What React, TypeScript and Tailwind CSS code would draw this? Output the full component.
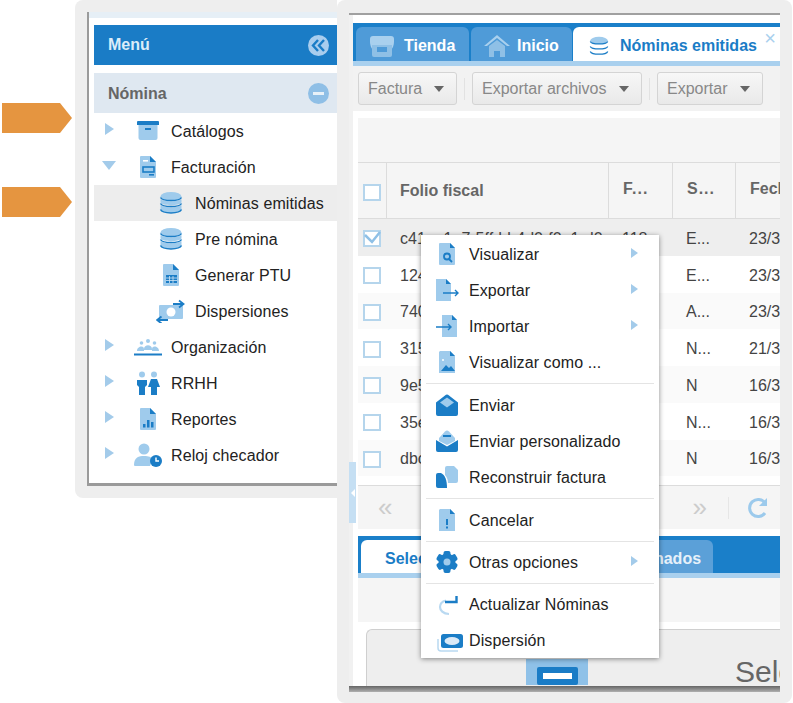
import type { ReactNode } from "react";

const L = "#9fcbec";
const D = "#1b7dc6";

function Ico({ w = 24, h = 24, vb = "0 0 24 24", children }: { w?: number; h?: number; vb?: string; children: ReactNode }) {
  return (
    <svg width={w} height={h} viewBox={vb} className="shrink-0">
      {children}
    </svg>
  );
}

const docPath = "M5 1h9l6 6v15a1 1 0 0 1-1 1H5a1 1 0 0 1-1-1V2a1 1 0 0 1 1-1z";
const docFold = "M14 1l6 6h-6z";

const ArchiveIcon = () => (
  <Ico>
    <path d="M2.500 6h19v13a2 2 0 0 1-2 2h-15a2 2 0 0 1-2-2z" fill={L} />
    <path d="M1 3a1 1 0 0 1 1-1h20a1 1 0 0 1 1 1v3H1z" fill={D} />
    <rect x="9" y="9" width="6" height="2" fill={D} />
  </Ico>
);
const InvoiceIcon = () => (
  <Ico>
    <path d={docPath} fill={L} />
    <path d={docFold} fill={D} />
    <rect x="7" y="5" width="5" height="1.600" fill="#fff" />
    <rect x="7" y="12" width="11" height="5" fill="none" stroke={D} strokeWidth="1.600" />
    <rect x="13" y="19" width="5" height="1.600" fill={D} />
  </Ico>
);
const DbIcon = ({ size = 24, flat = false }: { size?: number; flat?: boolean }) => (
  <Ico w={size} h={size}>
    <ellipse cx="12" cy="5.500" rx="10.500" ry="4.500" fill={L} />
    <path d="M1.500 8c2 3 19 3 21 0v3.500c-2 3.500-19 3.500-21 0z" fill={flat ? "#fff" : L} />
    <path d="M1.500 14c2 3 19 3 21 0v4.500c-2 4.500-19 4.500-21 0z" fill={flat ? "#fff" : L} />
    <path d="M1.500 6.500c2 4 19 4 21 0M1.500 12.500c2 4 19 4 21 0" fill="none" stroke={D} strokeWidth="1.500" />
    <path d="M1.500 18.500c2 4.500 19 4.500 21 0" fill="none" stroke={D} strokeWidth="1.500" />
  </Ico>
);
const CalcIcon = () => (
  <Ico>
    <path d={docPath} fill={L} />
    <path d={docFold} fill={D} />
    <rect x="7" y="12" width="11" height="8" fill={D} />
    <path d="M7 15h11M7 17.500h11M10.500 13v7M14 13v7" stroke="#cfe4f5" strokeWidth=".8" />
  </Ico>
);
const MoneyIcon = () => (
  <Ico w={30} h={24} vb="0 0 30 24">
    <rect x="3" y="6" width="24" height="14" rx="1" fill={L} />
    <circle cx="15" cy="13" r="4.500" fill="#fff" />
    <path d="M17 5h9M23 1.500L27.500 5 23 8.500" fill="none" stroke={D} strokeWidth="1.800" />
    <path d="M12 21H2M5.500 17.500L1 21l4.500 3.500" fill="none" stroke={D} strokeWidth="1.800" />
  </Ico>
);
const OrgIcon = () => (
  <Ico w={28} h={20} vb="0 0 28 20">
    <circle cx="14" cy="4" r="2" fill={L} />
    <circle cx="7.500" cy="6" r="1.800" fill={L} />
    <circle cx="20.500" cy="6" r="1.800" fill={L} />
    <path d="M10 12c0-5 8-5 8 0v1h-8zM3 14c0-5 7-6 7-2v2zM25 14c0-5-7-6-7-2v2z" fill={L} />
    <rect y="16.500" width="28" height="2" fill={D} />
  </Ico>
);
const PeopleIcon = () => (
  <Ico>
    <circle cx="6" cy="3.500" r="3" fill={L} />
    <circle cx="18" cy="3.500" r="3" fill={L} />
    <path d="M1 9h10v5l-2 2v8H3v-8l-2-2z" fill={D} />
    <path d="M15 8h6l3 8h-3v8h-6v-8h-3z" fill={D} />
  </Ico>
);
const ReportIcon = () => (
  <Ico>
    <path d={docPath} fill={L} />
    <path d={docFold} fill={D} />
    <rect x="7" y="17" width="2.500" height="3.500" fill={D} />
    <rect x="11" y="13" width="2.500" height="7.500" fill={D} />
    <rect x="15" y="15" width="2.500" height="5.500" fill={D} />
  </Ico>
);
const ClockUserIcon = () => (
  <Ico w={28} h={24} vb="0 0 28 24">
    <circle cx="10" cy="6" r="5.500" fill={L} />
    <path d="M0 22c0-8 5-9 10-9s7 1 9 3l-3 7H1a1 1 0 0 1-1-1z" fill={L} />
    <circle cx="22" cy="18" r="6" fill={D} />
    <path d="M22 14.500V18h3" fill="none" stroke="#fff" strokeWidth="1.400" />
  </Ico>
);
const StoreIcon = () => (
  <Ico w={24} h={22} vb="0 0 24 22">
    <path d="M3 1h18a3 3 0 0 1 3 3v3a2.500 2.500 0 0 1-24 0V4a3 3 0 0 1 3-3z" fill="#a9d0ee" />
    <path d="M2 10h20v10a2 2 0 0 1-2 2H4a2 2 0 0 1-2-2z" fill="#8fc0e6" />
    <rect x="7" y="12" width="10" height="5" fill="#4f9bd8" />
  </Ico>
);
const HomeIcon = () => (
  <Ico w={26} h={22} vb="0 0 26 22">
    <path d="M0 11L13 0l13 11h-3L13 3 3 11z" fill="#a9d0ee" />
    <path d="M5 11l8-6 8 6v11h-5v-6h-6v6H5z" fill="#8fc0e6" />
  </Ico>
);
const MiniArrow = ({ x1, x2, y }: { x1: number; x2: number; y: number }) => (
  <path d={`M${x1} ${y}H${x2}M${x2 - 3} ${y - 3}l3 3-3 3`} fill="none" stroke={D} strokeWidth="1.400" />
);
const ViewDocIcon = () => (
  <Ico>
    <path d="M5 1h10l5 5v16a1 1 0 0 1-1 1H5a1 1 0 0 1-1-1V2a1 1 0 0 1 1-1z" fill={L} />
    <path d="M15 1l5 5h-5z" fill={D} />
    <circle cx="12" cy="14.500" r="3" fill="none" stroke={D} strokeWidth="1.800" />
    <path d="M14 17l3 3" stroke={D} strokeWidth="1.800" />
  </Ico>
);
const ExportIcon = () => (
  <Ico>
    <path d="M1 1h10l5 5v17H1z" fill={L} />
    <path d="M11 1l5 5h-5z" fill={D} />
    <MiniArrow x1={8} x2={23} y={15} />
  </Ico>
);
const ImportIcon = () => (
  <Ico>
    <path d="M7 1h10l5 5v17H7z" fill={L} />
    <path d="M17 1l5 5h-5z" fill={D} />
    <MiniArrow x1={1} x2={16} y={13} />
  </Ico>
);
const ImageDocIcon = () => (
  <Ico>
    <path d="M5 1h10l5 5v17H4V2z" fill={L} />
    <path d="M15 1l5 5h-5z" fill={D} />
    <path d="M6 21l5-6 3 3 2-2 4 5z" fill={D} />
    <circle cx="8" cy="10" r="1" fill="#fff" />
  </Ico>
);
const MailOpenIcon = () => (
  <Ico>
    <path d="M1 9.500L10 2.500a3 3 0 0 1 4 0l9 7V21a2 2 0 0 1-2 2H3a2 2 0 0 1-2-2z" fill={D} />
    <path d="M5 9.500l7-5 7 5-7 5z" fill={L} />
  </Ico>
);
const MailCustomIcon = () => (
  <Ico>
    <path d="M4 9l6-6.500a3 3 0 0 1 4 0l6 6.500v3l-8 4-8-4z" fill={L} />
    <rect x="8" y="6" width="8" height="2" fill={D} />
    <path d="M1 11l11 6.500L23 11v10a2 2 0 0 1-2 2H3a2 2 0 0 1-2-2z" fill={D} />
  </Ico>
);
const RebuildIcon = () => (
  <Ico>
    <path d="M12 1h7l4 4v11a2 2 0 0 1-2 2h-8c0-3-1-6-3-8V3a2 2 0 0 1 2-2z" fill={L} />
    <path d="M3 8h3c4 2 6 7 6 15H3a2 2 0 0 1-2-2V10a2 2 0 0 1 2-2z" fill={D} />
  </Ico>
);
const AlertDocIcon = () => (
  <Ico>
    <path d="M5 1h10l5 5v17H4V2z" fill={L} />
    <path d="M15 1l5 5h-5z" fill={D} />
    <rect x="11" y="11" width="2" height="6" fill={D} />
    <rect x="11" y="18.500" width="2" height="2" fill={D} />
  </Ico>
);
const GearIcon = () => (
  <Ico>
    <circle cx="12" cy="12" r="8.500" fill={D} />
    <rect x="8.500" y="1" width="7" height="22" rx="2" fill={D} />
    <rect x="8.500" y="1" width="7" height="22" rx="2" fill={D} transform="rotate(60 12 12)" />
    <rect x="8.500" y="1" width="7" height="22" rx="2" fill={D} transform="rotate(120 12 12)" />
    <circle cx="12" cy="12" r="3.500" fill={L} />
  </Ico>
);
const UpdateIcon = () => (
  <Ico>
    <path d="M11 8.500C7 9.500 5 12 5 15s3 7 9 7" fill="none" stroke="#b9d9f1" strokeWidth="2.200" />
    <path d="M10 10h11.500V4" fill="none" stroke={D} strokeWidth="2.400" />
  </Ico>
);
const CashIcon = () => (
  <Ico w={34} h={24} vb="-7 0 34 24">
    <path d="M1 11v9a3 3 0 0 0 3 3h17" fill="none" stroke="#b9d9f1" strokeWidth="1.500" />
    <rect x="4" y="6" width="22" height="14" rx="2.500" fill={D} />
    <ellipse cx="15" cy="13" rx="7.500" ry="4" fill="#dbeaf7" />
  </Ico>
);

const TriRight = ({ small = false }: { small?: boolean }) => (
  <svg width={small ? 7 : 9} height={small ? 10 : 12} viewBox="0 0 10 13" preserveAspectRatio="none" className="shrink-0">
    <path d="M0 0l10 6.500L0 13z" fill="#a3cbea" />
  </svg>
);
const TriDown = () => (
  <svg width="14" height="9" viewBox="0 0 14 9" className="shrink-0">
    <path d="M0 0h14L7 9z" fill="#a3cbea" />
  </svg>
);
const Caret = () => (
  <svg width="10" height="6" viewBox="0 0 10 6" className="shrink-0">
    <path d="M0 0h10L5 6z" fill="#666" />
  </svg>
);
const Arrow = () => (
  <svg width="70" height="30" viewBox="0 0 70 30" className="ml-[2px]">
    <path d="M0 0h58l12 15-12 15H0z" fill="#e59540" />
  </svg>
);

const tree = [
  { label: "Catálogos", icon: <ArchiveIcon />, open: false },
  { label: "Facturación", icon: <InvoiceIcon />, open: true },
  { label: "Nóminas emitidas", icon: <DbIcon />, child: true, active: true },
  { label: "Pre nómina", icon: <DbIcon />, child: true },
  { label: "Generar PTU", icon: <CalcIcon />, child: true },
  { label: "Dispersiones", icon: <MoneyIcon />, child: true },
  { label: "Organización", icon: <OrgIcon />, open: false },
  { label: "RRHH", icon: <PeopleIcon />, open: false },
  { label: "Reportes", icon: <ReportIcon />, open: false },
  { label: "Reloj checador", icon: <ClockUserIcon />, open: false },
];

const rows = [
  { id: "c41ea1e7-5ffd-b4d0-f0e1-d0a9", f: "118", s: "E...", d: "23/3", on: true },
  { id: "124", f: "", s: "E...", d: "23/3" },
  { id: "740", f: "", s: "A...", d: "23/3" },
  { id: "315", f: "", s: "N...", d: "21/3" },
  { id: "9e5", f: "", s: "N", d: "16/3" },
  { id: "35e", f: "", s: "N...", d: "16/3" },
  { id: "dbc", f: "", s: "N", d: "16/3" },
];

type MenuItem = { label: string; icon: ReactNode; sub?: boolean };

const menu: (MenuItem | "sep" | "sep-sm")[] = [
  { label: "Visualizar", icon: <ViewDocIcon />, sub: true },
  { label: "Exportar", icon: <ExportIcon />, sub: true },
  { label: "Importar", icon: <ImportIcon />, sub: true },
  { label: "Visualizar como ...", icon: <ImageDocIcon /> },
  "sep",
  { label: "Enviar", icon: <MailOpenIcon /> },
  { label: "Enviar personalizado", icon: <MailCustomIcon /> },
  { label: "Reconstruir factura", icon: <RebuildIcon /> },
  "sep",
  { label: "Cancelar", icon: <AlertDocIcon /> },
  "sep-sm",
  { label: "Otras opciones", icon: <GearIcon />, sub: true },
  "sep-sm",
  { label: "Actualizar Nóminas", icon: <UpdateIcon /> },
  { label: "Dispersión", icon: <CashIcon /> },
];

function Checkbox({ on }: { on?: boolean }) {
  return (
    <div className="relative w-[18px] h-[17px] border-2 border-[#b5d5ec] bg-white">
      {on && (
        <svg width="18" height="16" viewBox="0 0 18 16" className="absolute -left-[2px] -top-[2px]">
          <path d="M2 5l7 7 8-10" fill="none" stroke="#8fc0e6" strokeWidth="2.500" />
        </svg>
      )}
    </div>
  );
}

function ToolButton({ label, w }: { label: string; w: string }) {
  return (
    <div className={`${w} h-[33px] flex items-center justify-between pl-[9px] pr-[12px] border border-[#d4d4d4] rounded-[3px] bg-gradient-to-b from-[#f7f7f7] to-[#e9e9e9] text-[#888] text-[16px]`}>
      <span>{label}</span>
      <Caret />
    </div>
  );
}

export default function App() {
  return (
    <div className="relative w-[793px] h-[703px] flex bg-white overflow-hidden font-['Liberation_Sans',Arial,sans-serif]">
      {/* Flechas */}
      <div className="w-[75px] shrink-0 pt-[103px] flex flex-col gap-[54px]">
        <Arrow />
        <Arrow />
      </div>

      {/* Menu lateral */}
      <div className="w-[262px] h-[498px] shrink-0 bg-[#eeeeee] rounded-l-lg pl-[12px] pt-[12px] pb-[12px]">
        <div className="h-full flex flex-col bg-white border-l-[2px] border-b-[3px] border-[#9a9a9a] pl-[5px]">
          <div className="h-[6px] bg-[#e6eff6] -ml-[5px]" />
          <div className="h-[7px]" />
          <div className="h-[40px] bg-[#1a7cc6] flex items-center justify-between pl-[14px] pr-[8px]">
            <span className="text-[#dcecf9] font-bold text-[16px]">Menú</span>
            <svg width="21" height="21" viewBox="0 0 21 21">
              <circle cx="10.500" cy="10.500" r="10.500" fill="#a8cdee" />
              <path d="M10 5l-5 5.500 5 5.500M16 5l-5 5.500 5 5.500" fill="none" stroke="#1a7cc6" strokeWidth="2.400" />
            </svg>
          </div>
          <div className="h-[8px]" />
          <div className="h-[40px] bg-[#dfe8f1] flex items-center justify-between pl-[14px] pr-[8px]">
            <span className="text-[#666] font-bold text-[16px] pt-[2px]">Nómina</span>
            <svg width="21" height="21" viewBox="0 0 21 21">
              <circle cx="10.500" cy="10.500" r="10.500" fill="#8fbfe6" />
              <rect x="5" y="9" width="11" height="3" fill="#e8f1f8" />
            </svg>
          </div>
          {tree.map((t) => (
            <div key={t.label} className={`h-[36px] flex items-center ${t.active ? "bg-[#ededed]" : ""}`}>
              {t.child ? (
                <div className="ml-[63px] w-[28px] flex justify-center">{t.icon}</div>
              ) : (
                <>
                  <div className="ml-[7px] w-[16px] h-[36px] flex justify-center items-center pb-[4px]">
                    {t.open ? <TriDown /> : <TriRight />}
                  </div>
                  <div className="ml-[17px] w-[28px] flex justify-center">{t.icon}</div>
                </>
              )}
              <span className={`${t.child ? "ml-[10px]" : "ml-[9px]"} pt-[2px] text-[16px] tracking-[0.1px] text-[#222] whitespace-nowrap`}>{t.label}</span>
            </div>
          ))}
        </div>
      </div>

      {/* Panel derecho */}
      <div className="relative w-[455px] h-[703px] shrink-0 bg-[#eeeeee] rounded-lg pl-[12px] pr-[12px] pt-[13px] pb-[11px]">
        <div className="h-full flex flex-col border-t-[2px] border-[#a0a0a0] bg-[#f1f1f1] overflow-hidden">
          <div className="flex-1 min-h-0 flex flex-col pl-[4px]">
            <div className="h-[8px] shrink-0 bg-white" />
            {/* Pestanas */}
            <div className="h-[43px] shrink-0 bg-[#1a7fc9] pt-[4px] pl-[3px] flex gap-[2px] border-b-[5px] border-[#a9d0ee]">
              <div className="w-[113px] rounded-t-md bg-[#4f9bd8] flex items-center gap-[10px] pl-[14px] pt-[3px] text-white font-bold text-[16px]">
                <StoreIcon />
                Tienda
              </div>
              <div className="w-[101px] rounded-t-md bg-[#4f9bd8] flex items-center gap-[7px] pl-[13px] pt-[3px] text-white font-bold text-[16px]">
                <HomeIcon />
                Inicio
              </div>
              <div className="flex-1 -ml-[1px] rounded-tl-md bg-white flex items-center gap-[11px] pl-[16px] pt-[3px] text-[#1a7cc6] font-bold text-[16px] whitespace-nowrap relative">
                <DbIcon size={20} flat />
                Nóminas emitidas
                <span className="absolute right-[4px] top-[-4px] text-[#a9d0ee] text-[20px] font-normal">×</span>
              </div>
            </div>
            {/* Barra de botones */}
            <div className="h-[45px] shrink-0 bg-[#f2f2f2] flex items-start pt-[6px] pl-[5px]">
              <ToolButton label="Factura" w="w-[99px]" />
              <div className="w-[1px] h-[22px] mt-[6px] mx-[7px] bg-[#e2e2e2]" />
              <ToolButton label="Exportar archivos" w="w-[170px]" />
              <div className="w-[1px] h-[22px] mt-[6px] mx-[7px] bg-[#e2e2e2]" />
              <ToolButton label="Exportar" w="w-[106px]" />
            </div>
            <div className="flex-1 bg-white pl-[5px] flex flex-col min-h-0">
              <div className="h-[7px] shrink-0" />
              <div className="h-[44px] shrink-0 bg-[#f5f5f5]" />
              {/* Tabla */}
              <div className="grid grid-cols-[28px_222px_64px_63px_45px] h-[57px] shrink-0 bg-[#f5f5f5] border-t border-b border-[#dcdcdc] text-[#666] font-bold text-[16px] items-stretch">
                <div className="flex items-center justify-center pt-[4px]">
                  <Checkbox />
                </div>
                <div className="flex items-center pl-[13px] border-l border-[#dcdcdc]">Folio fiscal</div>
                <div className="pl-[14px] pt-[14px] border-l border-[#dcdcdc] tracking-[1px]">F...</div>
                <div className="pl-[14px] pt-[14px] border-l border-[#dcdcdc] tracking-[1px]">S...</div>
                <div className="pl-[14px] pt-[14px] border-l border-[#dcdcdc] overflow-hidden whitespace-nowrap">Fecha</div>
              </div>
              {rows.map((r, i) => (
                <div
                  key={r.id}
                  className={`grid grid-cols-[28px_222px_64px_63px_45px] h-[36.750px] shrink-0 items-center pt-[3px] text-[16px] text-[#444] ${r.on ? "bg-[#eeeeee]" : i % 2 === 0 ? "bg-[#fafafa]" : "bg-white"}`}
                >
                  <div className="flex justify-center">
                    <Checkbox on={r.on} />
                  </div>
                  <div className="pl-[14px] overflow-hidden whitespace-nowrap">{r.id}</div>
                  <div className="pl-[14px]">{r.f}</div>
                  <div className="pl-[14px]">{r.s}</div>
                  <div className="pl-[14px] overflow-hidden whitespace-nowrap">{r.d}</div>
                </div>
              ))}
              <div className="h-[8.750px] shrink-0" />
              {/* Paginador */}
              <div className="h-[44px] shrink-0 border-t border-[#dcdcdc] bg-[#f5f5f5] flex items-center text-[#ccc] text-[26px] pl-[20px]">
                <span>«</span>
                <span className="ml-[300px]">»</span>
                <div className="ml-[21px] w-[1px] h-[22px] bg-[#e6e6e6]" />
                <svg width="24" height="24" viewBox="0 0 24 24" className="ml-[17px]">
                  <path d="M19 17a8.500 8.500 0 1 1 0-10" fill="none" stroke="#9ccaec" strokeWidth="3" />
                  <path d="M21 2v8h-8z" fill="#9ccaec" />
                </svg>
              </div>
              <div className="h-[7px] shrink-0" />
              {/* Segunda barra de pestanas */}
              <div className="h-[42px] shrink-0 bg-[#1a7fc9] border-b-[5px] border-[#a9d0ee] pt-[4px] pl-[3px] flex gap-[2px] font-bold text-[16px]">
                <div className="w-[199px] rounded-t-md bg-white text-[#1a7cc6] pl-[24px] pt-[7px]">Seleccionar</div>
                <div className="w-[151px] rounded-t-md bg-[#5ba0d8] text-[#e6f1fa] pl-[27px] pt-[7px]">Seleccionados</div>
              </div>
              <div className="h-[44px] shrink-0 bg-[#f5f5f5]" />
              <div className="h-[7px] shrink-0" />
              <div className="flex-1 min-h-0 ml-[8px] bg-[#eeeeee] border-t border-l border-[#cfcfcf] rounded-tl-md flex overflow-hidden">
                <div className="ml-[159px] mt-[29px] w-[62px] h-[26px] shrink-0 bg-[#8fc1e8] flex justify-center pt-[8px]">
                  <div className="w-[41px] h-[18px] bg-white border-[6px] border-[#1a7cc6] rounded-[2px]" />
                </div>
                <div className="ml-[147px] mt-[24px] text-[30px] leading-[36px] text-[#666] whitespace-nowrap">Seleccione</div>
              </div>
            </div>
          </div>
          <div className="h-[6px] shrink-0 bg-gradient-to-b from-[#666] to-[#b0b0b0]" />
        </div>

        {/* Asa del separador */}
        <div className="absolute left-[12px] top-[462px] w-[7px] h-[61px] bg-[#c5dff3] flex items-center justify-center">
          <div className="w-0 h-0 border-y-[4px] border-y-transparent border-r-[4px] border-r-white" />
        </div>

        {/* Menu contextual */}
        <div className="absolute left-[84px] top-[235px] w-[238px] h-[423px] bg-white shadow-[0_1px_5px_rgba(0,0,0,0.45)] pt-[1px]">
          {menu.map((m, i) =>
            typeof m === "string" ? (
              <div key={i} className={`${m === "sep" ? "h-[7px]" : "h-[6px]"} flex items-center px-[5px]`}>
                <div className="h-[1px] w-full bg-[#e4e4e4]" />
              </div>
            ) : (
              <div key={m.label} className="h-[36px] flex items-center text-[16px] tracking-[0.1px] text-[#222]">
                <div className="w-[48px] pl-[3px] flex justify-center">{m.icon}</div>
                <span className="whitespace-nowrap pt-[2px]">{m.label}</span>
                {m.sub && (
                  <div className="ml-auto mr-[21px] pb-[2px]">
                    <TriRight small />
                  </div>
                )}
              </div>
            ),
          )}
        </div>
      </div>
    </div>
  );
}
